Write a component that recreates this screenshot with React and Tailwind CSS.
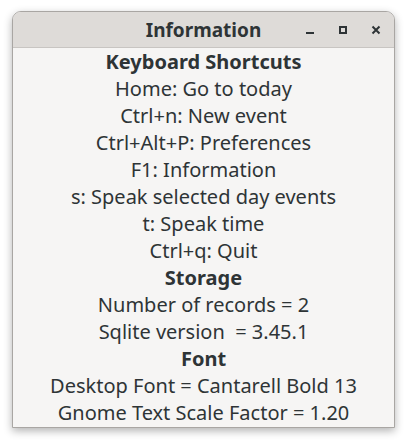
import React from "react";

const lines = [
  { t: "Keyboard Shortcuts", b: true },
  { t: "Home: Go to today" },
  { t: "Ctrl+n: New event" },
  { t: "Ctrl+Alt+P: Preferences" },
  { t: "F1: Information" },
  { t: "s: Speak selected day events" },
  { t: "t: Speak time" },
  { t: "Ctrl+q: Quit" },
  { t: "Storage", b: true },
  { t: "Number of records = 2" },
  { t: "Sqlite version\u00a0 = 3.45.1" },
  { t: "Font", b: true },
  { t: "Desktop Font = Cantarell Bold 13" },
  { t: "Gnome Text Scale Factor = 1.20" },
];

export default function App() {
  return (
    <div className="w-[408px] h-[443px] bg-white pt-[11px] pl-[12px]" style={{ fontFamily: '"Noto Sans", "Open Sans", sans-serif' }}>
      <div className="w-[383px] h-[417px] rounded-t-[9px] border border-[#a9a6a3] shadow-[0_3px_9px_rgba(0,0,0,0.3)] overflow-hidden flex flex-col bg-[#f6f5f4]">
        <div className="h-[36px] shrink-0 bg-[#dedbd8] border-b border-[#c8c5c2] flex items-center relative">
          <div className="absolute left-0 right-0 top-0 h-[36px] flex items-center justify-center text-[19px] font-bold text-[#2e3436]">
            Information
          </div>
          <div className="ml-auto flex items-center relative">
            <div className="w-[33px] h-[35px] flex items-center justify-center">
              <div className="w-[8px] h-[2px] bg-[#2e3436] mt-[6px]" />
            </div>
            <div className="w-[33px] h-[35px] flex items-center justify-center">
              <div className="w-[8px] h-[8px] border-2 border-[#2e3436]" />
            </div>
            <div className="w-[33px] h-[35px] flex items-center justify-center mr-[2px]">
              <svg width="10" height="10" viewBox="0 0 10 10">
                <path d="M1.5 1.5 L8.5 8.5 M8.5 1.5 L1.5 8.5" stroke="#2e3436" strokeWidth="2" />
              </svg>
            </div>
          </div>
        </div>
        <div className="flex flex-col items-center text-[#2e3436] text-[20px]">
          {lines.map((l, i) => (
            <div key={i} className={"h-[27px] leading-[27px] whitespace-pre " + (l.b ? "font-bold" : "")}>
              {l.t}
            </div>
          ))}
        </div>
      </div>
    </div>
  );
}
